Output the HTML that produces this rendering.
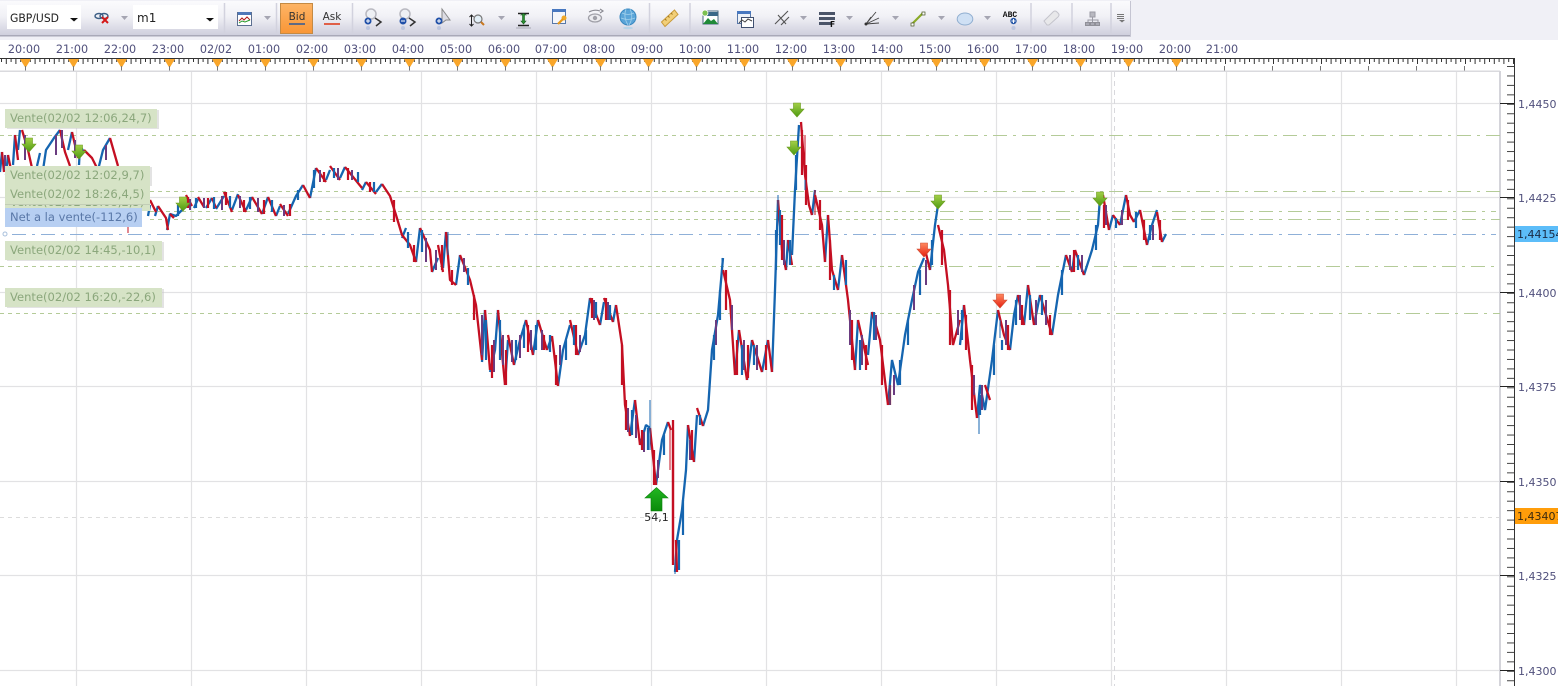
<!DOCTYPE html>
<html><head><meta charset="utf-8"><title>GBP/USD</title>
<style>
html,body{margin:0;padding:0;background:#fff;width:1558px;height:686px;overflow:hidden}
svg{display:block;position:absolute;left:0;top:0}
text{font-family:"DejaVu Sans","Liberation Sans",sans-serif;font-size:11px}
.t{fill:#50507c;text-anchor:middle;font-size:11.2px}
.p{fill:#50507c}
.l{fill:#8ba77c;font-size:11.55px}
</style></head><body>
<svg width="1558" height="686" viewBox="0 0 1558 686" xmlns="http://www.w3.org/2000/svg">
<defs>
<linearGradient id="tb" x1="0" y1="0" x2="0" y2="1"><stop offset="0" stop-color="#fbfbfd"/><stop offset=".45" stop-color="#f1f1f6"/><stop offset="1" stop-color="#cfcfdd"/></linearGradient>
<linearGradient id="bid" x1="0" y1="0" x2="0" y2="1"><stop offset="0" stop-color="#fdb466"/><stop offset="1" stop-color="#f99636"/></linearGradient>
<linearGradient id="ga" x1="0" y1="0" x2="0" y2="1"><stop offset="0" stop-color="#a4d048"/><stop offset="1" stop-color="#4c9a10"/></linearGradient>
<linearGradient id="ra" x1="0" y1="0" x2="0" y2="1"><stop offset="0" stop-color="#ff8a60"/><stop offset="1" stop-color="#e51e10"/></linearGradient>
<linearGradient id="ba" x1="0" y1="0" x2="0" y2="1"><stop offset="0" stop-color="#22b822"/><stop offset="1" stop-color="#0a8a0a"/></linearGradient>
<pattern id="rt" x="25" y="58" width="48" height="12" patternUnits="userSpaceOnUse">
<path d="M.5 0V6M5.3 0V4M10.1 0V6M14.9 0V4M19.7 0V6M24.5 0V4M29.3 0V6M34.1 0V4M38.9 0V6M43.7 0V4" stroke="#333" stroke-width="1" fill="none"/>
</pattern>
<pattern id="rv" x="1500" y="66" width="14" height="47.25" patternUnits="userSpaceOnUse">
<path d="M7 .5H14M7 9.95H14M7 19.4H14M7 28.85H14M7 38.3H14" stroke="#444" stroke-width="1" fill="none"/>
</pattern>
<path id="ar" d="M-3.500 -7H3.500V-1H7L0 7L-7 -1H-3.500Z"/>
</defs>

<!-- top bars -->
<rect x="0" y="0" width="1558" height="40" fill="#f0f0f6"/>
<rect x="0" y="1" width="1131" height="34" fill="url(#tb)"/>
<rect x="0" y="35" width="1131" height="1.500" fill="#a9a9b8"/>
<rect x="1130" y="1" width="1" height="35" fill="#c5c5d2"/>

<!-- combos -->
<rect x="7" y="5" width="74" height="24" fill="#fff"/>
<text x="10" y="22" style="font-size:11.5px" fill="#222" textLength="49" lengthAdjust="spacingAndGlyphs">GBP/USD</text>
<path d="M70 18h8l-4 3.500z" fill="#111"/>
<rect x="133" y="5" width="85" height="24" fill="#fff"/>
<text x="137" y="22" style="font-size:12px" fill="#222">m1</text>
<path d="M206 18h8l-4 3.500z" fill="#111"/>

<!-- separators -->
<g stroke="#d2d2de" stroke-width="1.500">
<path d="M224.500 3V34M276.500 3V34M352.500 3V34M649.500 3V34M690 3V34M1031 3V34M1072 3V34M1111 3V34"/>
</g>

<!-- link x -->
<g fill="none">
<ellipse cx="99" cy="16" rx="4" ry="2.500" stroke="#3d5f86" stroke-width="1.500"/>
<ellipse cx="104" cy="16" rx="4" ry="2.500" stroke="#3d5f86" stroke-width="1.500"/>
<path d="M102 17l6 6M108 17l-6 6" stroke="#d41818" stroke-width="2"/>
</g>
<path d="M121 16h7l-3.500 4z" fill="#a5a5b2"/>

<!-- chart icon -->
<rect x="237.500" y="12.500" width="14" height="13" fill="#fff" stroke="#5c6f90"/>
<rect x="238" y="12" width="13" height="3" fill="#4f78b8"/>
<path d="M239 21l3-3 2 2 3-3 3 3" stroke="#b01818" fill="none"/>
<path d="M239 23l3-2 3 1 5-2" stroke="#2a9a2a" fill="none"/>
<path d="M264 16h7l-3.500 4z" fill="#a5a5b2"/>

<!-- bid ask -->
<rect x="280.500" y="3.500" width="32" height="30" fill="url(#bid)" stroke="#c48a44"/>
<text x="297" y="20" style="font-size:10.5px;text-anchor:middle" fill="#333">Bid</text>
<rect x="289" y="23" width="16" height="2" fill="#5f6a84"/>
<text x="332" y="20" style="font-size:10.5px;text-anchor:middle" fill="#333">Ask</text>
<rect x="324" y="23" width="16" height="2" fill="#e06048"/>

<!-- zoom in -->
<circle cx="371" cy="14" r="5" fill="#eef0f4" stroke="#b8b8c0" stroke-width="1.500"/>
<path d="M375 18l6 4-5 4" stroke="#333" stroke-width="1.500" fill="none"/>
<circle cx="368" cy="21" r="3.500" fill="#2050a8"/><path d="M366 21h4M368 19v4" stroke="#fff"/>
<circle cx="368" cy="28" r="2" fill="#a8b8d8" opacity=".6"/>
<!-- zoom out -->
<circle cx="405" cy="14" r="5" fill="#eef0f4" stroke="#b8b8c0" stroke-width="1.500"/>
<path d="M409 18l6 4-5 4" stroke="#333" stroke-width="1.500" fill="none"/>
<circle cx="403" cy="21" r="3.500" fill="#2050a8"/><path d="M401 21h4" stroke="#fff"/>
<circle cx="403" cy="28" r="2" fill="#a8b8d8" opacity=".6"/>
<!-- cursor zoom -->
<path d="M442 9v14l4-3h4z" fill="#dcdce4" stroke="#888"/>
<circle cx="439" cy="21" r="3.500" fill="#2050a8"/><path d="M437 21h4M439 19v4" stroke="#fff"/>
<circle cx="439" cy="28" r="2" fill="#a8b8d8" opacity=".6"/>
<!-- zoom y -->
<path d="M471.500 15v11M469.500 17l2-2 2 2M469.500 24l2 2 2-2" stroke="#222" fill="none"/>
<circle cx="478" cy="19" r="4" fill="#e4f0f8" stroke="#777" stroke-width="1.200"/>
<path d="M481 22l3 3" stroke="#c87820" stroke-width="2"/>
<path d="M498 16h7l-3.500 4z" fill="#a5a5b2"/>
<!-- I beam -->
<path d="M518 13.500h11M518 25.500h11" stroke="#222" stroke-width="1.500"/>
<path d="M521 15l2.500-1.500L526 15h-1.500v6H526l-2.500 3-2.500-3h1.500v-6z" fill="#2a9030" stroke="#1a6020" stroke-width=".6"/>
<rect x="516" y="27" width="15" height="2" fill="#b0b0bc" opacity=".6"/>
<!-- window key -->
<rect x="552.500" y="9.500" width="13" height="14" fill="#f4f6fa" stroke="#5878a8"/>
<rect x="552" y="9" width="14" height="3" fill="#4878c0"/>
<circle cx="564" cy="18" r="2.500" fill="#f0a828"/><path d="M563 19l-5 5" stroke="#e89818" stroke-width="2.200"/>
<!-- eye -->
<ellipse cx="595" cy="18" rx="6.500" ry="4" fill="#ececf0" stroke="#a0a0a8" stroke-width="1.300"/>
<circle cx="595" cy="18" r="2.200" fill="#a0a0a8"/>
<path d="M589 12q6-3 11-1M600 9l3 2-3 2" stroke="#8c8c94" stroke-width="1.200" fill="none"/>
<!-- globe -->
<circle cx="628" cy="17" r="8" fill="#5ba5d8" stroke="#3a88c0"/>
<path d="M622 13q6 3 12 0M621 18q7 3 14 0M626 9q-3 8 2 16M630 9q4 8-1 16" stroke="#a0d0ec" fill="none" stroke-width=".8"/>
<ellipse cx="628" cy="28" rx="5" ry="1.300" fill="#b8d4e8"/>
<!-- ruler -->
<path d="M661.500 22l13-12 3.500 4.500-13 12z" fill="#f2cf78" stroke="#c89a3a"/>
<path d="M665 19l1.500 1.500M668 16l1.500 1.500M671 13l1.500 1.500" stroke="#a07820"/>
<!-- image -->
<rect x="703" y="11" width="15" height="13" fill="#fff" stroke="#4a6880"/>
<path d="M703 24l5-6 3 3 3-2 4 5z" fill="#1f8a38"/>
<rect x="703.500" y="12" width="14" height="4" fill="#3a6888"/>
<circle cx="705" cy="13" r="3" fill="#7cc050" stroke="#fff" stroke-width=".8"/>
<!-- chart window -->
<rect x="737.500" y="11.500" width="13" height="12" fill="#eef2f8" stroke="#5878a8"/>
<rect x="737" y="11" width="14" height="3" fill="#4878c0"/>
<rect x="741.500" y="17.500" width="12" height="10" fill="#fff" stroke="#405070"/>
<path d="M739 23l3-3 3 2 3-3 4 2" stroke="#444" fill="none"/>
<!-- fork -->
<path d="M775 24l13-13M781 25l8-8M778 15l8 9" stroke="#555" fill="none" stroke-width="1.100"/>
<path d="M800 16h7l-3.500 4z" fill="#a5a5b2"/>
<!-- list F -->
<rect x="819" y="12" width="16" height="3" fill="#4a5468"/><rect x="819" y="17" width="16" height="3" fill="#4a5468"/><rect x="819" y="22" width="12" height="3" fill="#4a5468"/>
<text x="830" y="27" style="font-size:7.5px;font-weight:bold" fill="#111">F</text>
<path d="M846 16h7l-3.500 4z" fill="#a5a5b2"/>
<!-- fan -->
<path d="M866 24l10-12M866 24l13-6M866 24l13-1M866 24l5-7" stroke="#444" fill="none" stroke-width=".9"/>
<circle cx="866" cy="24" r="1.500" fill="#333"/>
<path d="M892 16h7l-3.500 4z" fill="#a5a5b2"/>
<!-- line -->
<path d="M912 24l11-11" stroke="#8aaa28" stroke-width="2.200"/>
<rect x="911" y="23" width="3" height="3" fill="#fff" stroke="#445020" stroke-width=".7"/><rect x="922" y="12" width="3" height="3" fill="#fff" stroke="#445020" stroke-width=".7"/>
<path d="M938 16h7l-3.500 4z" fill="#a5a5b2"/>
<!-- ellipse -->
<ellipse cx="965" cy="19" rx="7.800" ry="6" fill="#cfe0f4" stroke="#90aed0"/>
<path d="M984 16h7l-3.500 4z" fill="#a5a5b2"/>
<!-- ABC -->
<text x="1010" y="17" style="font-size:8px;font-weight:bold;text-anchor:middle;font-family:'Liberation Mono',monospace" fill="#111">ABC</text>
<circle cx="1013.500" cy="21" r="3.200" fill="#2a5aa8"/><path d="M1011.500 21h4M1013.500 19v4" stroke="#fff"/>
<circle cx="1013.500" cy="28" r="2" fill="#a8b8d8" opacity=".6"/>
<!-- eraser -->
<path d="M1044 21l9-9q2-2 4 0l1 1q2 2 0 4l-9 8h-2z" fill="#e8e8ea" stroke="#c4c4cc"/>
<!-- org -->
<rect x="1090" y="12" width="5" height="5" fill="#b8b8c0" stroke="#9a9aa4"/>
<path d="M1092.500 17v3M1088 22v-2h10v2M1092.500 20v2" stroke="#9a9aa4" fill="none"/>
<rect x="1085.500" y="22.500" width="4" height="3" fill="#a8a8b2" stroke="#909098"/><rect x="1090.500" y="22.500" width="4" height="3" fill="#a8a8b2" stroke="#909098"/><rect x="1095.500" y="22.500" width="4" height="3" fill="#a8a8b2" stroke="#909098"/>
<!-- menu -->
<path d="M1117 14.500h7M1117 16.500h7M1117 18.500h7" stroke="#777"/>
<path d="M1119 20h6l-3 2.500z" fill="#777"/>

<!-- time scale -->
<g>
<text class="t" x="24" y="53">20:00</text><text class="t" x="72" y="53">21:00</text><text class="t" x="120" y="53">22:00</text><text class="t" x="168" y="53">23:00</text><text class="t" x="216" y="53">02/02</text><text class="t" x="264" y="53">01:00</text><text class="t" x="312" y="53">02:00</text><text class="t" x="360" y="53">03:00</text><text class="t" x="408" y="53">04:00</text><text class="t" x="456" y="53">05:00</text><text class="t" x="504" y="53">06:00</text><text class="t" x="551" y="53">07:00</text><text class="t" x="599" y="53">08:00</text><text class="t" x="647" y="53">09:00</text><text class="t" x="695" y="53">10:00</text><text class="t" x="743" y="53">11:00</text><text class="t" x="791" y="53">12:00</text><text class="t" x="839" y="53">13:00</text><text class="t" x="887" y="53">14:00</text><text class="t" x="935" y="53">15:00</text><text class="t" x="983" y="53">16:00</text><text class="t" x="1031" y="53">17:00</text><text class="t" x="1079" y="53">18:00</text><text class="t" x="1127" y="53">19:00</text><text class="t" x="1175" y="53">20:00</text><text class="t" x="1222" y="53">21:00</text>
</g>
<rect x="0" y="58" width="1514" height="12" fill="url(#rt)"/>
<rect x="0" y="58" width="1514" height="1" fill="#333"/>
<path d="M20 59h11l-5.500 9zM68 59h11l-5.500 9zM116 59h11l-5.500 9zM164 59h11l-5.500 9zM212 59h11l-5.500 9zM260 59h11l-5.500 9zM308 59h11l-5.500 9zM356 59h11l-5.500 9zM404 59h11l-5.500 9zM452 59h11l-5.500 9zM500 59h11l-5.500 9zM547 59h11l-5.500 9zM595 59h11l-5.500 9zM643 59h11l-5.500 9zM691 59h11l-5.500 9zM739 59h11l-5.500 9zM787 59h11l-5.500 9zM835 59h11l-5.500 9zM883 59h11l-5.500 9zM931 59h11l-5.500 9zM979 59h11l-5.500 9zM1027 59h11l-5.500 9zM1075 59h11l-5.500 9zM1123 59h11l-5.500 9zM1171 59h11l-5.500 9z" fill="#f9a62a"/>
<path d="M25.500 66v5M73.500 66v5M121.500 66v5M169.500 66v5M217.500 66v5M265.500 66v5M313.500 66v5M361.500 66v5M409.500 66v5M457.500 66v5M505.500 66v5M552.500 66v5M600.500 66v5M648.500 66v5M696.500 66v5M744.500 66v5M792.500 66v5M840.500 66v5M888.500 66v5M936.500 66v5M984.500 66v5M1032.500 66v5M1080.500 66v5M1128.500 66v5M1176.500 66v5M1224.500 66v5M1272.500 66v5M1320.500 66v5M1368.500 66v5M1416.500 66v5M1464.500 66v5" stroke="#777"/>

<!-- frame and grid -->
<rect x="0" y="70.500" width="1500" height="1.500" fill="#dadade"/>
<rect x="1499" y="71" width="2" height="615" fill="#d4d4da"/>
<path d="M0 103.500H1499M0 197.500H1499M0 292.500H1499M0 386.500H1499M0 481.500H1499M0 575.500H1499M0 670.500H1499M76.500 72V686M191.500 72V686M306.500 72V686M421.500 72V686M536.500 72V686M651.500 72V686M766.500 72V686M881.500 72V686M996.500 72V686M1111.500 72V686M1226.500 72V686M1341.500 72V686M1456.500 72V686" stroke="#e2e2e4" stroke-width="1.200" fill="none"/>
<path d="M1114.500 72V686" stroke="#d8d8dc" stroke-dasharray="5 4" fill="none"/>

<!-- order lines -->
<g fill="none" stroke="#b4cb98" stroke-width="1">
<path d="M0 135.500H790" stroke-dasharray="4 4"/><path d="M790 135.500H1500" stroke-dasharray="14 6 3 6"/>
<path d="M150 191.500H790" stroke-dasharray="4 4"/><path d="M790 191.500H1500" stroke-dasharray="14 6 3 6"/>
<path d="M150 211.500H940" stroke-dasharray="4 4"/><path d="M940 211.500H1496" stroke-dasharray="14 6 3 6"/>
<path d="M150 219.500H940" stroke-dasharray="4 4"/><path d="M940 219.500H1500" stroke-dasharray="14 6 3 6"/>
<path d="M0 266.500H920" stroke-dasharray="4 4"/><path d="M920 266.500H1497" stroke-dasharray="14 6 3 6"/>
<path d="M0 313.500H1000" stroke-dasharray="4 4"/><path d="M1000 313.500H1500" stroke-dasharray="14 6 3 6"/>
</g>
<path d="M12 234.500H1496" fill="none" stroke="#8fb0d8" stroke-dasharray="14 6 3 6"/>
<path d="M0 517.500H1499" fill="none" stroke="#dcdcdc" stroke-dasharray="4 4"/>
<circle cx="5" cy="234" r="2" fill="#fff" stroke="#a8c0dc"/>

<!-- price -->
<g fill="none" stroke-linejoin="bevel">
<path stroke="#1565b0" stroke-width="2.300" d="M0 172L2 152M6 175L8 155M13 165L15 135M18 150L20 130M37 166L40 153M43 170L46 150L54 138L60 130M68 150L72 132M79 165L80 146L84 152M98 170L103 150L110 138M148 216L150 205M155 216L158 206M167 230L170 214L176 216L182 210L186 207L190 200M194 208L198 199M206 208L212 198M216 209L224 196M232 210L238 194M246 210L252 197M262 214L268 197M276 216L280 206M288 214L296 196L303 185M310 198L316 168M326 180L330 170M340 178L345 167M362 190L366 182M376 192L382 184M402 238L406 228M416 262L420 228M432 272L438 258M443 268L446 232M456 285L460 255M482 362L485 310M490 372L495 350L498 310M505 385L508 340M514 365L520 340L526 320M533 355L538 320M547 350L552 336M558 386L563 350L570 325M578 355L585 335L590 298M600 325L604 302M613 322L616 305M630 436L635 400M640 445L646 425L650 428M656 485L662 440L668 422M675 572L677 540L682 510L686 470L688 425M694 462L697 415M703 426L708 410L712 350L718 315L723 258M735 375L739 330M747 380L752 340M762 372L768 340M772 372L775 290L778 200M786 270L788 240M792 255L795 190L799 125M812 215L815 190M825 262L828 215M838 290L842 255M855 370L858 320M868 355L872 312M888 405L892 360L898 385L905 335L912 300L918 272L924 258M930 270L935 225L938 205M960 345L964 305M977 418L980 385L985 410L992 360L998 310M1010 350L1014 315L1018 295M1024 325L1028 285M1034 325L1040 295M1052 335L1058 295L1066 255M1072 272L1075 250M1084 275L1092 250L1098 225L1100 198M1109 230L1113 215M1120 225L1126 195M1134 222L1140 210M1147 245L1152 225L1157 210M1162 242L1166 234"/>
<path stroke="#c40f22" stroke-width="2.300" d="M2 152L4 172M8 155L11 170M15 135L18 160M22 130L28 150L32 168M60 130L65 152L70 166M72 132L78 158M84 150L92 158L98 170M110 138L118 166M150 200L156 212M158 206L166 218L168 230M170 214L174 218M186 195L192 206M198 197L204 207M212 198L216 208M224 192L232 212M238 195L246 212M252 197L262 214M268 197L276 216M280 204L288 216M303 185L310 198M316 168L326 182M330 166L340 180M345 167L362 188M366 182L376 194M382 184L390 196L396 215L402 235L410 245L416 262M420 228L430 250L432 272M438 245L443 272M446 232L450 280L456 285M460 255L470 280L476 305L482 360M485 310L490 370M498 310L505 385M508 335L514 365M526 320L533 355M538 320L547 350M552 336L558 386M570 320L578 355M590 298L600 325M604 298L613 322M616 305L622 345L625 405L630 436M635 400L640 445M650 428L656 485M668 422L671 430M673 420L673 565M676 540L677 572M688 425L694 462M697 408L703 426M723 270L730 300L735 375M739 330L747 380M752 340L762 372M768 340L772 372M778 200L782 250L786 270M788 240L792 265M801 122L805 175L809 205L812 215M815 195L822 225L825 262M828 215L832 270L838 290M842 255L848 300L855 370M858 320L868 365M872 312L880 340L888 405M924 245L930 270M938 225L944 250L948 285L953 345L960 320M964 305L970 360L977 418M985 385L990 400M998 310L1004 335L1010 350M1018 295L1024 325M1028 285L1034 325M1040 295L1052 335M1066 255L1072 272M1075 250L1084 275M1103 195L1109 230M1113 215L1120 225M1126 195L1130 215L1134 222M1140 210L1147 245M1157 212L1162 242"/>
<!-- dense bars -->
<path stroke="#6a3b80" stroke-width="2" d="M5 155V170M25 135V160M56 135V155M62 130V148M75 140V158M106 145V160M190 199V210M204 198V208M222 196V210M240 196V208M258 198V212M284 205V216M320 170V182M338 168V180M352 170V180M426 238V262M436 250V270M464 258V272M482 315V355M494 340V372M503 335V365M512 340V362M520 335V358M531 330V350M542 330V350M560 345V365M580 335V352M594 300V320M608 302V320M628 408V432M636 415V438M644 432V452M658 460V478M690 440V460M716 320V345M732 305V330M744 340V370M757 345V370M784 240V265M850 310V345M862 335V365M876 315V340M894 375V395M914 285V310M926 260V285M958 310V335M974 375V395M982 385V410M1006 320V345M1020 295V320M1036 300V325M1046 300V325M1070 255V270M1082 255V272M1106 205V225M1122 210V225M1153 225V240"/>
<path stroke="#1565b0" stroke-width="2.200" d="M178 205V216M196 198V208M214 197V209M230 196V208M250 197V209M272 200V212M298 190V200M314 170V188M334 168V178M358 172V182M374 182V192M408 232V248M422 230V252M468 268V285M486 320V360M500 320V360M516 340V360M524 325V348M536 325V350M550 335V352M566 340V360M574 325V345M586 330V345M596 302V318M610 305V320M632 410V435M648 428V450M664 435V455M679 540V570M683 500V535M700 415V425M714 335V360M720 290V320M742 345V375M754 345V365M776 230V270M780 210V245M790 240V265M796 155V190M834 275V290M846 260V285M860 340V370M874 312V340M900 360V385M908 320V345M920 270V295M932 240V265M962 310V340M980 395V415M994 345V375M1002 340V350M1016 300V325M1030 295V320M1042 295V315M1062 270V295M1078 255V270M1096 225V250M1116 218V228M1136 212V228M1150 225V240"/>
<path stroke="#c40f22" stroke-width="2.200" d="M188 197V208M208 198V208M226 192V205M244 200V212M264 200V214M290 204V216M324 172V182M348 168V180M370 182V192M394 200V222M414 245V262M442 245V270M452 270V285M474 295V320M492 345V378M506 350V385M528 325V352M544 335V350M556 355V385M576 325V355M592 298V318M606 298V320M622 345V385M626 400V430M642 430V450M654 450V485M673 430V560M692 430V460M726 270V310M737 340V375M748 345V378M766 345V370M782 215V260M802 130V175M806 165V205M820 200V230M830 240V280M852 320V360M866 345V370M882 345V385M890 385V405M942 230V265M950 290V345M966 315V350M972 365V410M1008 325V350M1022 305V325M1050 315V335M1074 250V272M1104 205V228M1128 200V220M1144 220V240M1160 220V240"/>
<path stroke="#1565b0" stroke-width="1" d="M650 400V450M805 140V190M722 258V275M979 395V434M1000 320V338M890 385V405M778 195V210M448 232V255M132 218V226M675 560V574"/>
<path stroke="#c40f22" stroke-width="1" d="M128 225V233M815 190V215M805 135V180M670 425V470"/>
</g>

<!-- arrows -->
<g stroke="#6a9a1c" stroke-width=".6">
<use href="#ar" x="29" y="145" fill="url(#ga)"/>
<use href="#ar" x="79" y="152" fill="url(#ga)"/>
<use href="#ar" x="183" y="204" fill="url(#ga)"/>
<use href="#ar" x="797" y="110" fill="url(#ga)"/>
<use href="#ar" x="794" y="148" fill="url(#ga)"/>
<use href="#ar" x="938" y="202" fill="url(#ga)"/>
<use href="#ar" x="1100" y="199" fill="url(#ga)"/>
</g>
<g stroke="#d04a30" stroke-width=".6">
<use href="#ar" x="924" y="250" fill="url(#ra)"/>
<use href="#ar" x="1000" y="301" fill="url(#ra)"/>
</g>
<path d="M651 511V498H645L656.500 487.500L668 498H662V511Z" fill="url(#ba)" stroke="#0a800a" stroke-width=".6"/>
<text x="656.500" y="521" style="font-size:11px;text-anchor:middle" fill="#222">54,1</text>

<!-- order labels -->
<g>
<rect x="7" y="110" width="152" height="19" fill="#c8c8c8" opacity=".5"/>
<rect x="5" y="109" width="152" height="19" fill="#d6e3c6"/>
<text class="l" x="10" y="122">Vente(02/02 12:06,24,7)</text>
<rect x="5" y="192" width="145" height="19" fill="#d6e3c6"/>
<text class="l" x="10" y="206">Vente(02/02 15:08,2,5)</text>
<rect x="7" y="167" width="145" height="19" fill="#c8c8c8" opacity=".5"/>
<rect x="5" y="166" width="145" height="19" fill="#d6e3c6"/>
<text class="l" x="10" y="179">Vente(02/02 12:02,9,7)</text>
<rect x="5" y="185" width="145" height="19" fill="#d6e3c6"/>
<rect x="5" y="204" width="145" height="1" fill="#c2cdb6"/>
<text class="l" x="10" y="198">Vente(02/02 18:26,4,5)</text>
<rect x="5" y="208" width="137" height="19" fill="#b7cff2"/>
<text x="10" y="221" fill="#5a78a8" style="font-size:11.55px">Net a la vente(-112,6)</text>
<rect x="7" y="242" width="157" height="19" fill="#c8c8c8" opacity=".5"/>
<rect x="5" y="241" width="157" height="19" fill="#d6e3c6"/>
<text class="l" x="10" y="254">Vente(02/02 14:45,-10,1)</text>
<rect x="7" y="289" width="157" height="19" fill="#c8c8c8" opacity=".5"/>
<rect x="5" y="288" width="157" height="19" fill="#d6e3c6"/>
<text class="l" x="10" y="301">Vente(02/02 16:20,-22,6)</text>
</g>

<!-- right axis -->
<rect x="1500" y="66" width="14" height="620" fill="url(#rv)"/>
<path d="M1514.500 58V686" stroke="#333" fill="none"/>
<path d="M1500 103.500H1514M1500 197.500H1514M1500 292.500H1514M1500 386.500H1514M1500 481.500H1514M1500 575.500H1514M1500 670.500H1514" stroke="#222" fill="none"/>
<text class="p" x="1518" y="108">1,4450</text>
<text class="p" x="1518" y="202">1,4425</text>
<text class="p" x="1518" y="297">1,4400</text>
<text class="p" x="1518" y="391">1,4375</text>
<text class="p" x="1518" y="486">1,4350</text>
<text class="p" x="1518" y="580">1,4325</text>
<text class="p" x="1518" y="675">1,4300</text>
<rect x="1515" y="226" width="43" height="16" fill="#5cbdf9"/>
<text x="1517" y="238" fill="#1a2a44">1,44154</text>
<rect x="1515" y="508" width="43" height="16" fill="#ff9d0a"/>
<text x="1517" y="520" fill="#3a2a10">1,43407</text>
</svg>
</body></html>
